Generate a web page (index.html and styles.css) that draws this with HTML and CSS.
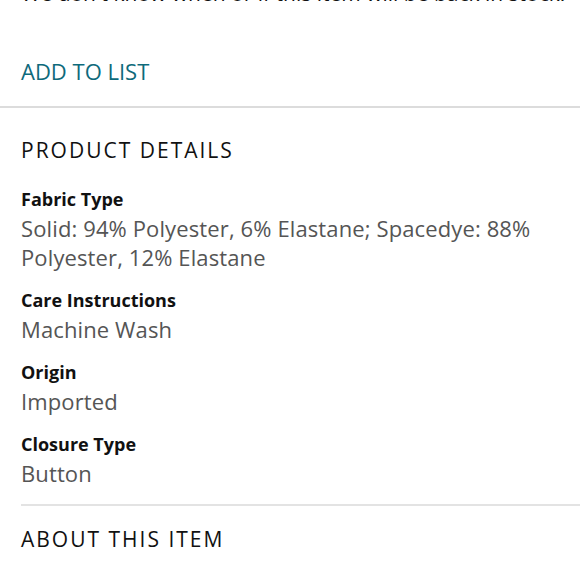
FILE: index.html
```html
<!DOCTYPE html>
<html>
<head>
<meta charset="utf-8">
<link rel="stylesheet" href="styles.css">
</head>
<body>
<div class="page">
  <p class="stock">We don't know when or if this item will be back in stock.</p>
  <div class="add"><a class="add-link">ADD TO LIST</a></div>
  <section class="details">
    <h2 class="heading">PRODUCT DETAILS</h2>
    <dl class="list">
      <div class="item"><dt>Fabric Type</dt><dd>Solid: 94% Polyester, 6% Elastane; Spacedye: 88% Polyester, 12% Elastane</dd></div>
      <div class="item"><dt>Care Instructions</dt><dd>Machine Wash</dd></div>
      <div class="item"><dt>Origin</dt><dd>Imported</dd></div>
      <div class="item"><dt>Closure Type</dt><dd>Button</dd></div>
    </dl>
  </section>
  <section class="about">
    <h2 class="heading">ABOUT THIS ITEM</h2>
  </section>
</div>
</body>
</html>
```
FILE: styles.css
```css
html, body {
  margin: 0;
  padding: 0;
  background: #fff;
}
body {
  font-family: "Open Sans", "Noto Sans", sans-serif;
  overflow: hidden;
  height: 580px;
}
.page {
  display: flex;
  flex-direction: column;
}
.stock {
  margin: -21px 0 0 21px;
  font-size: 21px;
  line-height: 29px;
  color: #111;
  white-space: nowrap;
}
.add {
  padding: 49px 21px 20px;
  border-bottom: 2px solid #dcdcdc;
}
.add-link {
  font-size: 22px;
  line-height: 29px;
  color: #0e6a7b;
}
.details {
  margin-left: 21px;
  padding: 28px 21px 16px 0;
  border-bottom: 2px solid #e3e3e3;
}
.heading {
  margin: 0;
  font-size: 21px;
  font-weight: 400;
  letter-spacing: 2px;
  line-height: 29px;
  color: #111;
}
.list {
  margin: 20px 0 0;
  display: flex;
  flex-direction: column;
  gap: 14px;
}
.item dt {
  font-size: 18px;
  font-weight: 700;
  line-height: 29px;
  color: #111;
}
.item dd {
  margin: 0;
  font-size: 22px;
  letter-spacing: 0.12px;
  line-height: 29px;
  color: #555;
}
.about {
  padding: 19px 21px 0;
}
```
